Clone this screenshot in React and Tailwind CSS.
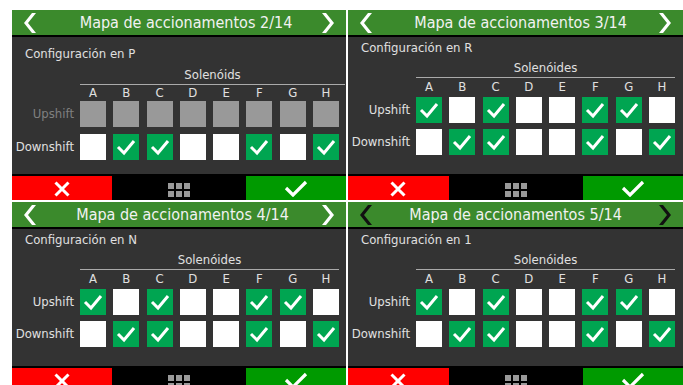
import React from 'react';

const FONT = { fontFamily: '"DejaVu Sans Condensed", "DejaVu Sans", sans-serif' };
const LETTERS = ['A', 'B', 'C', 'D', 'E', 'F', 'G', 'H'];
const UP = [1, 0, 1, 0, 0, 1, 1, 0];
const DOWN = [0, 1, 1, 0, 0, 1, 0, 1];

const panels = [
  { page: '2/14', gear: 'P', sol: 'Solenóids', upDisabled: true, shift: 'pl-[14px]', dark: false },
  { page: '3/14', gear: 'R', sol: 'Solenóides', upDisabled: false, shift: 'pl-[10px]', dark: false },
  { page: '4/14', gear: 'N', sol: 'Solenóides', upDisabled: false, shift: 'pl-[7px]', dark: false },
  { page: '5/14', gear: '1', sol: 'Solenóides', upDisabled: false, shift: 'pl-0', dark: true },
];

const Chevron = ({ dir, dark }) => (
  <svg width="12" height="20" viewBox="0 0 12 20" className="shrink-0">
    <polygon
      points={dir === 'left' ? '0,10 8,0 12,0 4,10 12,20 8,20' : '12,10 4,0 0,0 8,10 0,20 4,20'}
      fill={dark ? '#111' : '#fff'}
    />
  </svg>
);

const Check = () => (
  <svg width="26" height="26" viewBox="0 0 26 26">
    <polyline points="5,13 11,19 21,7" fill="none" stroke="#fff" strokeWidth="3" />
  </svg>
);

const Box = ({ on, disabled }) => {
  if (disabled) return <div className="w-[26px] h-[26px] bg-[#999999]" />;
  return on ? (
    <div className="w-[26px] h-[26px] bg-[#00a551]">
      <Check />
    </div>
  ) : (
    <div className="w-[26px] h-[26px] bg-white" />
  );
};

const Row = ({ label, values, disabled, className }) => (
  <div className={`flex items-center ${className}`}>
    <div className={`w-[62px] text-right text-[13px] leading-[14px] ${disabled ? 'text-[#808080]' : 'text-[#e0e0e0]'}`}>
      {label}
    </div>
    <div className="ml-[6px] w-[259px] flex justify-between">
      {values.map((v, i) => (
        <Box key={i} on={v} disabled={disabled} />
      ))}
    </div>
  </div>
);

const Panel = ({ p }) => {
  const tall = p.upDisabled;
  return (
    <div className="flex flex-col h-[190px] overflow-hidden">
      <div className="h-[27px] bg-[#3b8a2c] border-b-2 border-black flex items-center px-[12px]">
        <Chevron dir="left" dark={p.dark} />
        <div className={`flex-1 text-center text-[#f2f2f2] text-[16px] leading-[20px] ${p.shift}`}>
          Mapa de accionamentos {p.page}
        </div>
        <Chevron dir="right" dark={p.dark} />
      </div>

      <div className={`h-[137px] bg-[#333333] flex flex-col ${tall ? 'pt-[10px]' : 'pt-[4px]'}`}>
        <div className="pl-[13px] text-[13px] leading-[14px] text-[#e0e0e0]">Configuración en {p.gear}</div>
        <div className={`ml-[68px] ${tall ? 'w-[265px] mt-[7px]' : 'w-[259px] mt-[6px]'} text-center text-[13px] leading-[14px] text-[#e0e0e0]`}>
          {p.sol}
        </div>
        <div className={`ml-[68px] ${tall ? 'w-[265px]' : 'w-[259px]'} mt-[2px] h-px bg-[#aaaaaa]`} />
        <div className={`ml-[68px] w-[259px] flex justify-between ${tall ? 'mt-[1px]' : 'mt-[2px]'}`}>
          {LETTERS.map((l) => (
            <div key={l} className="w-[26px] text-center text-[13px] leading-[14px] text-[#e0e0e0]">
              {l}
            </div>
          ))}
        </div>
        <Row label="Upshift" values={UP} disabled={p.upDisabled} className={tall ? 'mt-[1px]' : 'mt-[3px]'} />
        <Row label="Downshift" values={DOWN} className={tall ? 'mt-[7px]' : 'mt-[6px]'} />
      </div>

      <div className="h-[26px] border-t-2 border-black grid grid-cols-[30%_40%_30%]">
        <div className="bg-[#ff0000] flex items-center justify-center">
          <svg width="16" height="16" viewBox="0 0 16 16" className="mt-[2px]">
            <path d="M1.5,1.5 L14.5,14.5 M14.5,1.5 L1.5,14.5" stroke="#fff" strokeWidth="3" />
          </svg>
        </div>
        <div className="bg-black flex items-center justify-center">
          <div className="grid grid-cols-3 gap-[2px] mt-[3px]">
            {[0, 1, 2, 3, 4, 5].map((i) => (
              <div key={i} className="w-[6px] h-[6px] bg-[#999999]" />
            ))}
          </div>
        </div>
        <div className="bg-[#009a00] flex items-center justify-center">
          <svg width="24" height="17" viewBox="0 0 24 17">
            <polyline points="2,8 9,15 22,2" fill="none" stroke="#fff" strokeWidth="3.2" />
          </svg>
        </div>
      </div>
    </div>
  );
}

export default function App() {
  return (
    <div className="w-[683px] h-[385px] overflow-hidden bg-white pl-[12px] pt-[10px]" style={FONT}>
      <div className="grid grid-cols-[334px_335px] gap-[2px]">
        {panels.map((p) => (
          <Panel key={p.page} p={p} />
        ))}
      </div>
    </div>
  );
}
